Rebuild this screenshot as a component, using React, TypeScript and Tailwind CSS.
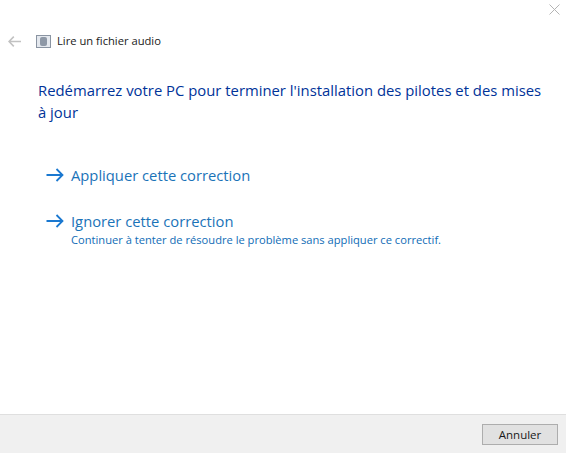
import React from "react";

function Arrow() {
  return (
    <svg width="18" height="14" viewBox="0 0 18 14" fill="none" stroke="#1a78d0" strokeWidth="1.8" className="shrink-0">
      <path d="M0.5 7H16.5M10.5 1L16.5 7L10.5 13" />
    </svg>
  );
}

export default function App() {
  return (
    <div className="w-[566px] h-[453px] bg-white flex flex-col overflow-hidden font-['Open_Sans',sans-serif] relative">
      <svg width="11" height="11" viewBox="0 0 11 11" className="absolute left-[549px] top-[4px]" stroke="#b4b4b4" strokeWidth="1" fill="none">
        <path d="M0.5 0.5L10.5 10.5M10.5 0.5L0.5 10.5" />
      </svg>
      <div className="flex-1 flex flex-col">
        <div className="flex items-center h-[14px] mt-[34px] pl-[8px]">
          <svg width="13" height="11" viewBox="0 0 13 11" fill="none" stroke="#c2c2c2" strokeWidth="1.6">
            <path d="M13 5.5H1M5.8 0.6L1 5.5L5.8 10.4" />
          </svg>
          <div className="ml-[15px] w-[15px] h-[13px] bg-[#e4e8ee] border border-[#8a94a2] flex items-center justify-center">
            <div className="w-[7px] h-[9px] bg-[#8e98a6] rounded-[2px]" />
          </div>
          <span className="ml-[6px] text-[11.2px] leading-[14px] text-[#1a1a1a]">Lire un fichier audio</span>
        </div>
        <h1 className="ml-[38px] mt-[31px] w-[510px] text-[14.85px] leading-[22px] font-normal text-[#003399]">
          Redémarrez votre PC pour terminer l'installation des pilotes et des mises à jour
        </h1>
        <div className="ml-[46px] mt-[41px] flex items-center gap-[7px]">
          <Arrow />
          <span className="text-[14.75px] leading-[22px] text-[#1a73b8]">Appliquer cette correction</span>
        </div>
        <div className="ml-[46px] mt-[24px] flex items-center gap-[7px]">
          <Arrow />
          <span className="text-[14.75px] leading-[22px] text-[#1a73b8]">Ignorer cette correction</span>
        </div>
        <p className="ml-[71px] mt-[1px] text-[11.15px] leading-[14px] text-[#0f6cb6]">
          Continuer à tenter de résoudre le problème sans appliquer ce correctif.
        </p>
      </div>
      <div className="h-[39px] bg-[#f0f0f0] border-t border-[#dfdfdf] flex justify-end items-start pt-[9px] pr-[8px]">
        <button className="w-[76px] h-[21px] bg-[#e1e1e1] border border-[#adadad] text-[11.5px] leading-[19px] text-[#1a1a1a]">
          Annuler
        </button>
      </div>
    </div>
  );
}
